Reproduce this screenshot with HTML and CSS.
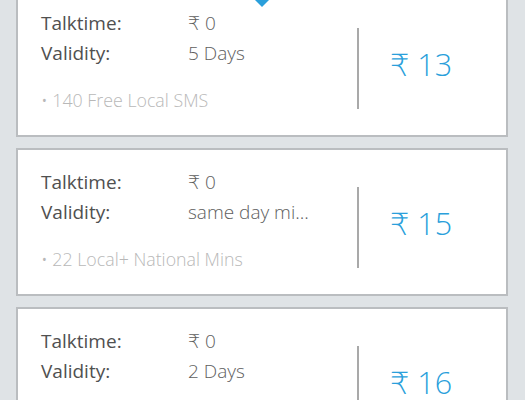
FILE: index.html
```html
<!DOCTYPE html>
<html lang="en">
<head>
<meta charset="UTF-8" />
<meta name="viewport" content="width=device-width, initial-scale=1.0" />
<title>Recharge Plans</title>
<link rel="stylesheet" href="styles.css">
</head>
<body>
  <!-- tab pointer from the header above -->
  <div class="pointer"></div>

  <main class="plans">
    <div class="plan">
      <div class="info">
        <div class="row"><span class="label">Talktime:</span><span class="value">₹ 0</span></div>
        <div class="row"><span class="label">Validity:</span><span class="value">5 Days</span></div>
        <p class="benefit">• 140 Free Local SMS</p>
      </div>
      <div class="divider"></div>
      <div class="price">₹ 13</div>
    </div>

    <div class="plan">
      <div class="info">
        <div class="row"><span class="label">Talktime:</span><span class="value">₹ 0</span></div>
        <div class="row"><span class="label">Validity:</span><span class="value">same day mi...</span></div>
        <p class="benefit">• 22 Local+ National Mins</p>
      </div>
      <div class="divider"></div>
      <div class="price">₹ 15</div>
    </div>

    <div class="plan">
      <div class="info">
        <div class="row"><span class="label">Talktime:</span><span class="value">₹ 0</span></div>
        <div class="row"><span class="label">Validity:</span><span class="value">2 Days</span></div>
        <p class="benefit">• 100 Local Mins</p>
      </div>
      <div class="divider"></div>
      <div class="price">₹ 16</div>
    </div>
  </main>
</body>
</html>
```

FILE: styles.css
```css
:root {
  --bg: #dfe3e6;
  --line: #babdc0;
  --blue: #2a9fdb;
  --label: #505050;
  --value: #5e5e5e;
  --muted: #b8b8b8;
}
* { box-sizing: border-box; margin: 0; padding: 0; font-family: 'Open Sans', 'DejaVu Sans', sans-serif; }
html, body { height: 100%; overflow: hidden; }
body { background: var(--bg); position: relative; }

/* little arrow under the selected tab */
.pointer {
  position: absolute;
  top: -2px;
  left: 253px;
  width: 0;
  height: 0;
  border-left: 9px solid transparent;
  border-right: 9px solid transparent;
  border-top: 9px solid var(--blue);
  z-index: 2;
}

.plans { display: flex; flex-direction: column; gap: 11px; padding: 0 17px 0 16px; margin-top: -11px; }
.plan { display: flex; height: 148px; background: #fff; border: 2px solid var(--line); }

.info { flex: 1; padding: 17px 0 0 23px; }
.row { display: grid; grid-template-columns: 147px 1fr; font-size: 19px; line-height: 30px; }
.label { color: var(--label); font-weight: 400; }
.value { color: var(--value); font-weight: 300; }
.benefit { margin-top: 20px; font-size: 17.8px; line-height: 24px; font-weight: 300; color: var(--muted); }

.divider { width: 2px; height: 81px; margin-top: 37px; background: #a9a9a9; }
.price { width: 147px; padding: 57px 0 0 31px; font-size: 30.5px; line-height: 32px; font-weight: 300; color: var(--blue); }
```
